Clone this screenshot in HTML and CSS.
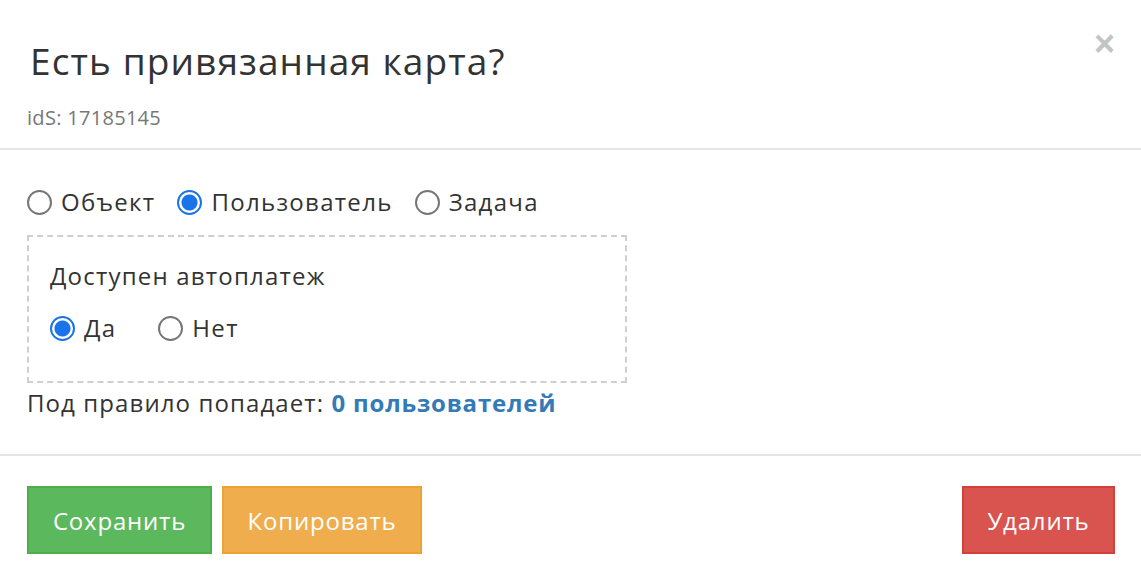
FILE: index.html
```html
<!DOCTYPE html>
<html lang="ru">
<head>
<meta charset="utf-8">
<link rel="stylesheet" href="styles.css">
</head>
<body>
<div class="modal">
  <div class="modal-header">
    <button class="close" type="button">×</button>
    <h2 class="title">Есть привязанная карта?</h2>
    <div class="ids">idS: 17185145</div>
  </div>
  <div class="modal-body">
    <div class="radio-row">
      <label class="radio"><span class="dot"></span>Объект</label>
      <label class="radio"><span class="dot checked"></span>Пользователь</label>
      <label class="radio"><span class="dot"></span>Задача</label>
    </div>
    <div class="rule-box">
      <div class="rule-label">Доступен автоплатеж</div>
      <div class="radio-row inner">
        <label class="radio"><span class="dot checked"></span>Да</label>
        <label class="radio"><span class="dot"></span>Нет</label>
      </div>
    </div>
    <div class="summary">Под правило попадает: <a class="count">0 пользователей</a></div>
  </div>
  <div class="modal-footer">
    <button class="btn btn-save" type="button">Сохранить</button>
    <button class="btn btn-copy" type="button">Копировать</button>
    <button class="btn btn-delete" type="button">Удалить</button>
  </div>
</div>
</body>
</html>
```
FILE: styles.css
```css
* { box-sizing: border-box; }
html, body {
  margin: 0;
  padding: 0;
  background: #fff;
}
body {
  font-family: "Open Sans", "Liberation Sans", sans-serif;
  color: #333;
  width: 1141px;
  height: 580px;
  overflow: hidden;
}
.modal {
  display: flex;
  flex-direction: column;
}
.modal-header {
  position: relative;
  padding: 36px 27px 0 27px;
  height: 150px;
  border-bottom: 2px solid #e5e5e5;
}
.title {
  margin: 0 0 0 3px;
  font-weight: 400;
  font-size: 37px;
  letter-spacing: 1.1px;
  line-height: 50px;
  color: #333;
}
.ids {
  margin-top: 19px;
  font-size: 20px;
  letter-spacing: 0.3px;
  line-height: 26px;
  color: #777;
}
.close {
  position: absolute;
  right: 26px;
  top: 27px;
  border: 0;
  background: none;
  padding: 0;
  font-family: "Liberation Sans", sans-serif;
  font-weight: 700;
  font-size: 36px;
  line-height: 34px;
  color: #c4c4c4;
}
.modal-body {
  padding: 36px 27px 0 27px;
  height: 306px;
  border-bottom: 2px solid #e5e5e5;
}
.radio-row {
  display: flex;
  align-items: center;
  gap: 22px;
  font-size: 24px;
  letter-spacing: 1.3px;
  line-height: 32px;
}
.radio-row.inner { gap: 42px; }
.radio {
  display: flex;
  align-items: center;
  gap: 9px;
}
.dot {
  width: 25px;
  height: 25px;
  border-radius: 50%;
  border: 2px solid #767676;
  background: #fff;
  flex: none;
}
.dot.checked {
  border: 2px solid #1a73e8;
  background: radial-gradient(circle, #1a73e8 0 7.5px, #fff 8.5px);
}
.rule-box {
  margin-top: 17px;
  width: 600px;
  height: 148px;
  border: 2px dashed #cfcfcf;
  padding: 23px 21px 0 21px;
}
.rule-label {
  font-size: 24px;
  letter-spacing: 1.2px;
  line-height: 32px;
  margin-bottom: 20px;
}
.summary {
  margin-top: 4px;
  font-size: 24px;
  letter-spacing: 1.1px;
  line-height: 32px;
}
.count {
  color: #337ab7;
  font-weight: 700;
  letter-spacing: 0.8px;
}
.modal-footer {
  display: flex;
  align-items: center;
  gap: 10px;
  padding: 30px 26px 0 27px;
}
.btn {
  font-family: inherit;
  font-size: 24px;
  letter-spacing: 0.8px;
  color: #fff;
  height: 68px;
  padding: 0;
  border: 2px solid;
  border-radius: 0;
}
.btn-save { background: #5cb85c; border-color: #4cae4c; width: 185px; }
.btn-copy { background: #f0ad4e; border-color: #eea236; width: 200px; }
.btn-delete { background: #d9534f; border-color: #d43f3a; width: 153px; margin-left: auto; }
```
